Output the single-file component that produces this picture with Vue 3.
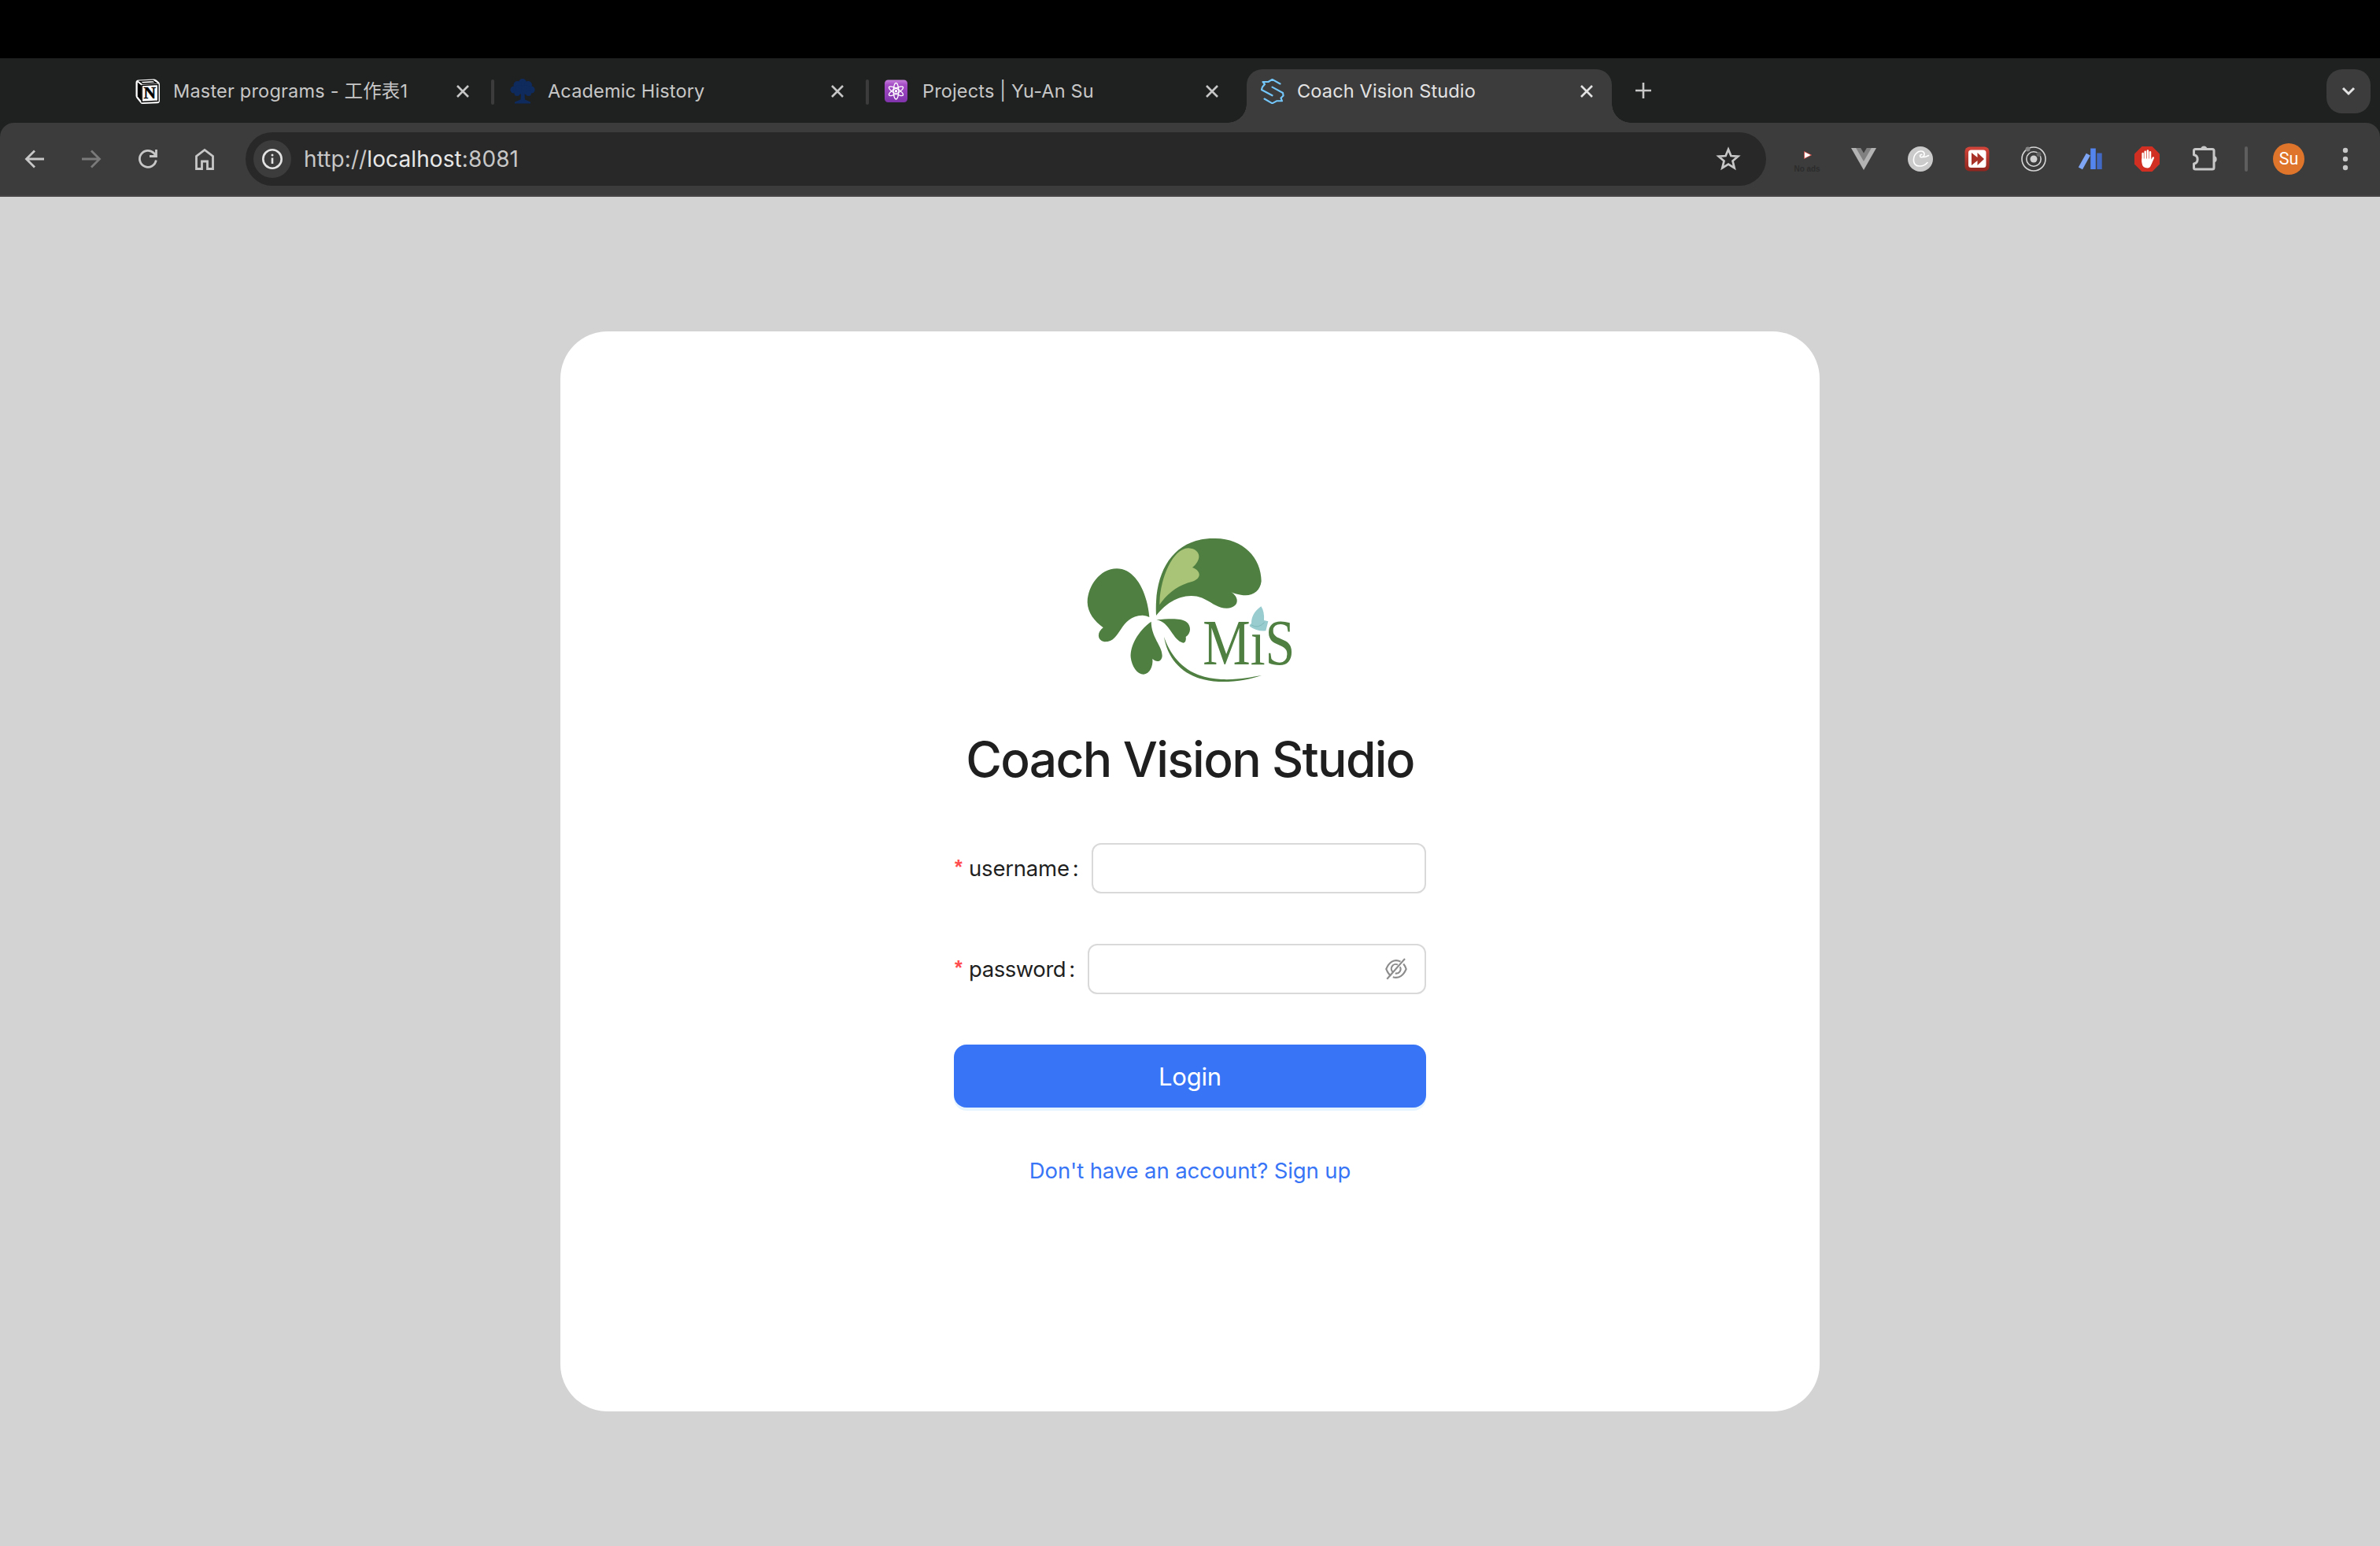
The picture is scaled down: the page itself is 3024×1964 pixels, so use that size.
<script setup>
const tabs = [
  { id: 'notion', title: 'Master programs - 工作表1' },
  { id: 'tree', title: 'Academic History' },
  { id: 'atom', title: 'Projects | Yu-An Su' },
  { id: 'studio', title: 'Coach Vision Studio', active: true },
]
</script>

<template>
  <div class="screen">
    <div class="menubar"></div>
    <div class="tabstrip">
      <div v-for="t in tabs" :key="t.id" class="tab" :class="[t.id, { active: t.active }]">
        <svg v-if="t.id === 'notion'" class="fav" viewBox="0 0 32 32">
          <path d="M4 1.500 23 .5Q25 .4 26.500 1.600L30 4.500Q31 5.500 31 7V28Q31 31 28 31.200L9 32Q7.500 32 6.300 30.500L1.500 24.500Q.5 23 .5 21.500V5Q.5 1.700 4 1.500Z" fill="#fff" />
          <path d="M5.500 3.300 22.500 2.400 26.500 5.300 9.500 6.300Z" fill="#fff" stroke="#000" stroke-width="1.400" />
          <path d="M2.800 4.500 7.600 8.400V28.500L2.800 22.500Z" fill="#000" />
          <path d="M8.200 8.500 28.800 7.300V28.200L8.200 29.400Z" fill="#fff" stroke="#000" stroke-width="1.500" />
          <text x="10.600" y="24.600" font-family="Liberation Serif, serif" font-weight="700" font-size="20" textLength="15.500" lengthAdjust="spacingAndGlyphs" fill="#000" stroke="#000" stroke-width=".5">N</text>
        </svg>
        <svg v-else-if="t.id === 'tree'" class="fav" viewBox="0 0 32 32" fill="#0f2a5c">
          <circle cx="16" cy="5" r="5" /><circle cx="9.500" cy="8" r="5" /><circle cx="23" cy="8" r="5" />
          <circle cx="5" cy="14" r="4.600" /><circle cx="27" cy="14" r="4.600" /><circle cx="12" cy="14" r="6" /><circle cx="20" cy="14" r="6" />
          <circle cx="9" cy="18.500" r="3.500" /><circle cx="23.500" cy="18.500" r="3.500" />
          <path d="M14 18H18.500L19 26.500 26 29.500V31.500H6V29.500L13.500 26.500Z" />
        </svg>
        <svg v-else-if="t.id === 'atom'" class="fav" viewBox="0 0 32 32">
          <defs><linearGradient id="atomBg" x1="0" y1="0" x2="0" y2="1"><stop offset="0" stop-color="#c67fdc" /><stop offset=".22" stop-color="#a44cc5" /><stop offset="1" stop-color="#7f33ab" /></linearGradient></defs>
          <rect x="0" y="1.500" width="29" height="28.500" rx="4.500" fill="url(#atomBg)" />
          <g fill="none" stroke="#fff" stroke-width="1.300">
            <ellipse cx="14.500" cy="15.700" rx="3.300" ry="10.300" />
            <ellipse cx="14.500" cy="15.700" rx="3.300" ry="10.300" transform="rotate(60 14.500 15.700)" />
            <ellipse cx="14.500" cy="15.700" rx="3.300" ry="10.300" transform="rotate(120 14.500 15.700)" />
          </g>
          <circle cx="14.500" cy="15.700" r="1.700" fill="#fff" />
        </svg>
        <svg v-else class="fav" viewBox="0 0 32 32" fill="none" stroke="#74c7fb" stroke-width="2.100" stroke-linecap="round" stroke-linejoin="round">
          <path d="M24.500 6.500 14.500.9 9.500 4H2.500L5 7 2 10.500.9 14 14.500 21.300" />
          <path d="M14.500 10.700 28 18 28.600 21.500 25.500 24.500 27 28.300H20L14.500 31.300 4.500 25.500" />
        </svg>
        <span class="title">{{ t.title }}</span>
        <svg class="close" viewBox="0 0 16 16"><path d="M1 1 15 15M15 1 1 15" /></svg>
      </div>
      <svg class="plus" viewBox="0 0 20 20"><path d="M10 0V20M0 10H20" /></svg>
      <div class="dropdown">
        <svg width="18" height="12" viewBox="0 0 18 12"><path d="M2 2 9 9 16 2" fill="none" stroke="#e3e3e3" stroke-width="3" /></svg>
      </div>
    </div>

    <div class="toolbar-back">
      <div class="toolbar">
        <div class="cell"><svg width="32" height="32" viewBox="0 0 32 32" class="ic"><path d="M28 16H6M16 5.500 5.500 16 16 26.500" /></svg></div>
        <div class="cell dim"><svg width="32" height="32" viewBox="0 0 32 32" class="ic"><path d="M4 16H26M16 5.500 26.500 16 16 26.500" /></svg></div>
        <div class="cell"><svg width="32" height="32" viewBox="0 0 32 32" class="ic"><path d="M26.300 17.500A10.500 10.500 0 1 1 23.500 8.500L26 12" /><path d="M26.500 4V12.500H18" /></svg></div>
        <div class="cell"><svg width="32" height="32" viewBox="0 0 32 32" class="ic"><path d="M5.500 28.500V12.500L16 4.500 26.500 12.500V28.500H19.500V19H12.500V28.500Z" /></svg></div>
        <div class="omnibox">
          <div class="info">
            <svg width="28" height="28" viewBox="0 0 28 28"><circle cx="14" cy="14" r="11.700" fill="none" stroke="#e3e3e3" stroke-width="2.600" /><path d="M14 12.500V20" stroke="#e3e3e3" stroke-width="2.600" /><circle cx="14" cy="9" r="1.500" fill="#e3e3e3" /></svg>
          </div>
          <span class="url">http://<b>localhost</b>:8081</span>
          <svg class="star" viewBox="0 0 32 32"><path d="M16 3.700 19.400 12 28.300 12.700 21.500 18.500 23.700 27.300 16 22.600 8.300 27.300 10.500 18.500 3.700 12.700 12.600 12Z" fill="none" stroke="#c7c7c7" stroke-width="2.700" /></svg>
        </div>
        <div class="cell first">
          <svg width="36" height="36" viewBox="0 0 36 36"><path d="M14.500 8.500 23.500 13 14.500 17.500Z" fill="#fff" stroke="#d0453c" stroke-width=".8" /><text x="1.500" y="34" font-family="Liberation Sans, sans-serif" font-weight="700" font-size="10" textLength="33" fill="#2c2c2c">No ads</text></svg>
        </div>
        <div class="cell">
          <svg width="32" height="32" viewBox="0 0 32 32"><path d="M0 2H32L16 30Z" fill="#b3b3b3" /><path d="M6.200 2H25.800L16 19Z" fill="#808080" /><path d="M12.200 2H19.800L16 8.500Z" fill="#3c3c3c" /></svg>
        </div>
        <div class="cell">
          <svg width="32" height="32" viewBox="0 0 32 32"><circle cx="16" cy="16" r="16" fill="#cacaca" /><path d="M25 20.500C20 26.500 9 27 7.500 19 6.500 11 13 4.500 18.500 6.300 22.500 8 21.500 13.200 17.800 13.800 14.800 13.800 14.800 10.300 17.800 10.400M17.800 13.800Q23 13.800 26.500 11.500" fill="none" stroke="#fff" stroke-width="1.600" stroke-linecap="round" /></svg>
        </div>
        <div class="cell">
          <svg width="32" height="32" viewBox="0 0 32 32"><defs><linearGradient id="ffBg" x1="0" y1="0" x2="0" y2="1"><stop offset="0" stop-color="#d5453a" /><stop offset="1" stop-color="#8d261f" /></linearGradient></defs><rect x=".5" y=".5" width="31" height="31" rx="6" fill="url(#ffBg)" /><rect x="5" y="4.500" width="22.500" height="22.500" rx="3.500" fill="#fff" /><path d="M9 8 16.500 14V8L25 16 16.500 24V18L9 24Z" fill="#a93228" /></svg>
        </div>
        <div class="cell">
          <svg width="32" height="32" viewBox="0 0 32 32"><g fill="none" stroke="#d6d6d6" stroke-width="1.600"><circle cx="16" cy="16" r="15" /><circle cx="16" cy="16" r="9.200" /></g><circle cx="16" cy="16" r="4.500" fill="#d0d0d0" /><circle cx="8.500" cy="3.500" r="3" fill="#858585" /><circle cx="22.500" cy="10" r="3" fill="#686868" /></svg>
        </div>
        <div class="cell">
          <svg width="32" height="32" viewBox="0 0 32 32"><path d="M10.800 8.700 15.800 11.500 6 29.300 .8 26.500Z" fill="#7ea6f5" /><rect x="16.200" y="2.500" width="6.600" height="26.500" fill="#5484ee" /><rect x="24.300" y="8.500" width="6.400" height="20.500" fill="#4269c4" /></svg>
        </div>
        <div class="cell">
          <svg width="32" height="32" viewBox="0 0 32 32"><path d="M9.500 0H22.500L32 9.500V22.500L22.500 32H9.500L0 22.500V9.500Z" fill="#d22f23" /><g stroke="#fff" stroke-width="2.500" stroke-linecap="round" fill="none"><path d="M10.600 9V19M13.700 6.800V18M16.900 5.500V18M20 7.200V18M23.800 14.500 20.500 22" /></g><path d="M9.350 15.500H21.200L22.300 18 21 24Q19.500 27.500 16.500 27.500 10 27.500 9.350 20.500Z" fill="#fff" /></svg>
        </div>
        <div class="cell">
          <svg class="puzzle" width="36" height="36" viewBox="0 0 36 36"><path d="M3.500 7.500Q3.500 5.500 5.500 5.500H27Q29 5.500 29 7.500V29Q29 31 27 31H5.500Q3.500 31 3.500 29V24A5.700 5.700 0 0 0 3.500 12.800Z" fill="none" stroke="#c7c7c7" stroke-width="3" stroke-linejoin="round" /><path d="M12 5.500A4.300 4 0 0 1 20.600 5.500ZM29 14A4.300 4.300 0 0 1 29 22.500Z" fill="#c7c7c7" /></svg>
        </div>
        <div class="divider"><i></i></div>
        <div class="cell"><div class="avatar">Su</div></div>
        <div class="cell">
          <svg width="32" height="32" viewBox="0 0 32 32" fill="#c7c7c7"><circle cx="16" cy="5" r="3.200" /><circle cx="16" cy="16" r="3.200" /><circle cx="16" cy="27" r="3.200" /></svg>
        </div>
      </div>
    </div>

    <main class="page">
      <section class="card">
        <svg class="logo" viewBox="0 0 930 690">
          <g fill="#4f7f41">
            <path d="M301 372C292 270 245 187 177 187 110 187 65 258 65 316 66 355 92 388 125 412 102 428 100 460 130 466 195 468 185 368 275 365Q290 366 301 372Z" />
            <path d="M327 366C318 200 390 72 545 72 655 68 728 145 728 235 724 275 690 296 650 287 635 286 622 280 613 277 645 296 645 335 596 338 545 338 520 290 460 291 400 292 355 330 327 366Z" />
            <path d="M308 389C258 425 228 480 230 525 234 560 255 590 279 590 302 588 316 560 313 531 330 548 350 540 350 518 349 480 309 450 308 389Z" />
            <path d="M328 382C375 378 420 374 442 390 462 405 460 435 440 447 442 460 438 470 430 470 390 462 380 390 328 382Z" />
            <path d="M357 447C372 540 440 612 565 618 630 620 690 608 729 594 690 600 640 612 575 609 450 605 385 530 357 447Z" />
          </g>
          <path d="M340 325C340 235 385 112 450 109 495 112 505 150 465 183 500 195 500 225 465 236 410 250 370 280 340 325Z" fill="#a9c476" />
          <text x="505" y="551" font-family="Liberation Serif, serif" font-size="248" textLength="351" lengthAdjust="spacingAndGlyphs" fill="#4f7f41">MiS</text>
          <path d="M727 331C700 350 690 372 690 396Q681 402 684 407 710 427 745 424L754 388 738 384Q740 350 727 331Z" fill="#99cccf" />
          <path d="M690 402Q715 418 740 392" fill="none" stroke="#7fb9bb" stroke-width="3" />
        </svg>
        <h1>Coach Vision Studio</h1>
        <form class="form" @submit.prevent>
          <label class="field">
            <span class="req">*</span><span class="user">username</span><span class="colon">:</span>
            <span class="input"></span>
          </label>
          <label class="field">
            <span class="req">*</span><span class="pass">password</span><span class="colon">:</span>
            <span class="input">
              <svg width="28" height="28" viewBox="0 0 28 28" fill="none" stroke="#8c8c8c" stroke-width="2.100"><path d="M19.500 4.700Q14 1.500 8.500 4.600 4 7.300 1.300 14 4 20.700 7.300 22.500M23.200 7.500Q25.300 10 26.700 14 24 20.300 19.700 23.200 15 26 9.800 24.200" /><path d="M16 8.600A5.600 5.600 0 0 0 10 18M18.800 11.200A5.600 5.600 0 0 1 12.800 19.500" /><path d="M2.300 26.800 25 1" /></svg>
            </span>
          </label>
          <button class="login" type="button">Login</button>
          <a class="signup">Don't have an account? Sign up</a>
        </form>
      </section>
    </main>
  </div>
</template>

<style>
html, body { margin: 0; background: #d3d3d3; }
</style>

<style scoped>
.screen { width: 3024px; height: 1964px; display: flex; flex-direction: column; overflow: hidden; font-family: Inter, "Noto Sans CJK TC", sans-serif; }
.menubar { height: 74px; background: #000; flex: none; }
.tabstrip { height: 82px; flex: none; background: #1f2120; display: flex; align-items: center; padding-left: 156px; box-sizing: border-box; }
.tab { position: relative; width: 476px; height: 82px; box-sizing: border-box; display: flex; align-items: center; padding-left: 16px; color: #c7c7c7; }
.tab:not(.active):not(.atom)::after { content: ""; position: absolute; right: 4px; top: 27px; width: 4px; height: 32px; border-radius: 2px; background: #3c3c3c; }
.tab.active { width: 464px; height: 68px; margin-top: 14px; padding: 0 0 14px 18px; border-radius: 20px 20px 0 0; background: #3c3c3c; color: #e3e3e3; }
.tab.active::before, .tab.active::after { content: ""; position: absolute; bottom: 0; width: 24px; height: 24px; }
.tab.active::before { left: -24px; background: radial-gradient(circle at 0 0, transparent 23.500px, #3c3c3c 24px); }
.tab.active::after { right: -24px; background: radial-gradient(circle at 100% 0, transparent 23.500px, #3c3c3c 24px); }
.fav { width: 32px; height: 32px; flex: none; margin-top: 2px; }
.title { width: 360px; margin-left: 16px; padding-top: 2px; font-size: 23.500px; line-height: 32px; letter-spacing: .15px; white-space: nowrap; flex: none; }
.notion .title { letter-spacing: .2px; }
.active .title { margin-left: 14px; }
.close { width: 16px; height: 16px; flex: none; stroke: currentColor; stroke-width: 2.600; margin-top: 2px; }
.plus { width: 20px; height: 20px; margin-left: 30px; stroke: #c7c7c7; stroke-width: 2.600; }
.dropdown { width: 56px; height: 56px; margin: 2px 12px 0 auto; border-radius: 20px; background: #3c3c3c; display: flex; align-items: center; justify-content: center; }
.toolbar-back { flex: none; background: #1f2120; }
.toolbar { height: 94px; box-sizing: border-box; background: #3c3c3c; border-bottom: 2px solid #474545; border-radius: 18px 18px 0 0; display: flex; align-items: center; padding-left: 8px; }
.cell { width: 72px; height: 72px; display: flex; align-items: center; justify-content: center; flex: none; }
.ic { fill: none; stroke: #c7c7c7; stroke-width: 2.800; }
.dim .ic { stroke: #7a7a7a; }
.omnibox { width: 1932px; height: 68px; margin-left: 16px; border-radius: 34px; background: #282828; display: flex; align-items: center; flex: none; }
.info { width: 48px; height: 48px; margin-left: 10px; border-radius: 50%; background: #3c3c3c; display: flex; align-items: center; justify-content: center; }
.url { margin-left: 16px; font-size: 28px; line-height: 40px; letter-spacing: .1px; color: #c7c7c7; }
.url b { font-weight: 400; color: #e8e8e8; }
.star { width: 32px; height: 32px; margin: 0 32px 0 auto; }
.first { margin-left: 16px; }
.puzzle { margin-left: 4px; }
.divider { width: 36px; display: flex; justify-content: center; }
.divider i { width: 4px; height: 32px; border-radius: 2px; background: #5e5e5e; }
.avatar { width: 40px; height: 40px; border-radius: 50%; background: #df742b; color: #fff; font: 21.500px/40px Roboto, sans-serif; text-align: center; }
.page { flex: 1; background: #d3d3d3; display: flex; align-items: center; justify-content: center; }
.card { width: 1600px; height: 1371.200px; box-sizing: border-box; border-radius: 60px; background: #fff; display: flex; flex-direction: column; align-items: center; padding-top: 238.600px; }
.logo { width: 310px; height: 230px; margin-left: 6px; }
h1 { margin: 35px 0 0; font-size: 62.300px; line-height: 80px; font-weight: 500; letter-spacing: -1.650px; color: #1f1f1f; white-space: nowrap; }
.form { width: 600px; margin-top: 66px; display: flex; flex-direction: column; align-items: center; }
.field { width: 600px; height: 64px; margin-bottom: 64px; display: flex; align-items: center; font-size: 27.500px; color: #1f1f1f; }
.req { width: 18px; margin: -4px 0 0 1px; color: #ff4d4f; font: 700 25px/24px "Liberation Sans", sans-serif; }
.user { letter-spacing: -.2px; }
.pass { letter-spacing: -.45px; }
.colon { margin: 0 16px 0 4px; }
.input { flex: 1; height: 64px; box-sizing: border-box; border: 2px solid #d9d9d9; border-radius: 12px; display: flex; align-items: center; justify-content: flex-end; padding-right: 22px; background: #fff; }
.login { width: 600px; height: 80px; border: 0; border-radius: 16px; background: #3875f6; color: #fff; font-family: inherit; font-size: 31px; letter-spacing: -.2px; box-shadow: 0 4px 0 rgba(5, 145, 255, .1); }
.signup { margin-top: 60px; font-size: 27.500px; line-height: 40px; letter-spacing: -.12px; color: #3875f6; white-space: nowrap; }
</style>
